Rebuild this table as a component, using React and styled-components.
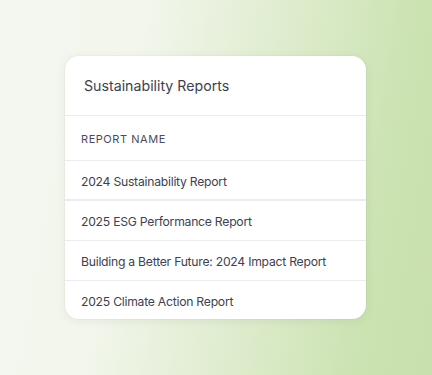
import React from 'react'
import styled, { createGlobalStyle } from 'styled-components'

const GlobalStyle = createGlobalStyle`
  html, body {
    margin: 0;
    padding: 0;
  }
  body {
    font-family: Inter, 'Noto Sans', 'Liberation Sans', sans-serif;
    -webkit-font-smoothing: antialiased;
  }
`

const Page = styled.div`
  width: 432px;
  height: 375px;
  box-sizing: border-box;
  padding: 56px 0 0 65px;
  background: linear-gradient(100deg, #f4f7f0 0%, #f2f6ec 30%, #dcebca 62%, #cbe2b1 85%, #c8e0ad 100%);
  overflow: hidden;
`

const Card = styled.section`
  width: 301px;
  background: #ffffff;
  border-radius: 14px;
  box-shadow: 0 2px 10px rgba(60, 80, 40, 0.08), 0 0 0 1px rgba(0, 0, 0, 0.02);
  overflow: hidden;
`

const CardHeader = styled.header`
  height: 60px;
  display: flex;
  align-items: center;
  padding: 0 0 1px 19px;
  border-bottom: 1px solid #ececee;
  box-sizing: border-box;
`

const Title = styled.h2`
  margin: 0;
  font-size: 14.2px;
  font-weight: 400;
  color: #3d3f50;
  letter-spacing: 0;
`

const Table = styled.div`
  display: flex;
  flex-direction: column;
`

const Row = styled.div`
  height: ${p => p.height}px;
  display: flex;
  align-items: center;
  padding: 2px 0 0 16px;
  box-sizing: border-box;
  border-bottom: ${p => (p.last ? 'none' : `${p.thick ? 2 : 1}px solid #ececee`)};
  font-size: ${p => (p.head ? 11 : 12.2)}px;
  color: ${p => (p.head ? '#4a4c5c' : '#3f4150')};
  text-transform: ${p => (p.head ? 'uppercase' : 'none')};
  letter-spacing: ${p => (p.head ? '0.55px' : '-0.25px')};
`

const reports = [
  '2024 Sustainability Report',
  '2025 ESG Performance Report',
  'Building a Better Future: 2024 Impact Report',
  '2025 Climate Action Report',
]

const App = () => {
  return (
    <>
      <GlobalStyle />
      <Page>
        <Card>
          <CardHeader>
            <Title>Sustainability Reports</Title>
          </CardHeader>
          <Table>
            <Row head height={45}>Report Name</Row>
            {reports.map((r, i) => (
              <Row
                key={r}
                height={i === reports.length - 1 ? 38 : 40}
                thick={i === 0}
                last={i === reports.length - 1}
              >
                {r}
              </Row>
            ))}
          </Table>
        </Card>
      </Page>
    </>
  )
}

export default App
